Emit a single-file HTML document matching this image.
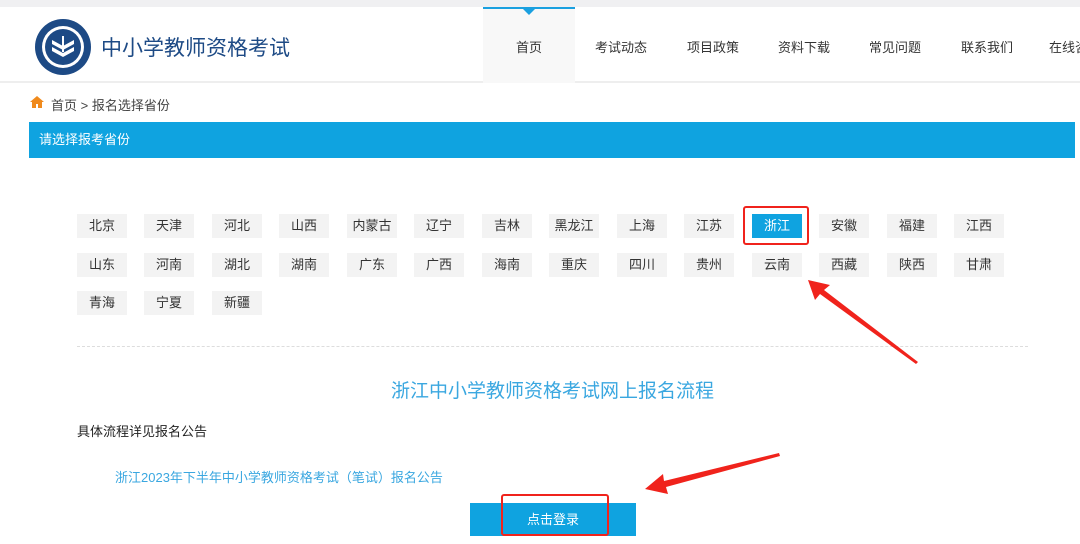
<!DOCTYPE html><html><head><meta charset="utf-8"><style>
*{margin:0;padding:0;box-sizing:border-box}
body{width:1080px;height:544px;overflow:hidden;background:#fff;font-family:"Liberation Sans","Noto Sans CJK SC",sans-serif;position:relative;font-size:13px;color:#333}
.abs{position:absolute}
.top{left:0;top:0;width:1080px;height:7px;background:#f0f0f2}
.hdr{left:0;top:7px;width:1080px;height:76px;background:#fff;border-bottom:2px solid #eee}
.nav{top:7px;height:76px;line-height:82px;font-size:13px;color:#333;text-align:center}
.p{position:absolute;width:50px;height:24px;line-height:24px;background:#f3f3f3;text-align:center;font-size:13px;color:#333}
</style></head><body>
<div class="abs top"></div>
<div class="abs hdr"></div>
<svg class="abs" style="left:34px;top:18px" width="58" height="58" viewBox="0 0 58 58"><circle cx="29" cy="29" r="28" fill="#1d4a85"/><circle cx="29" cy="29" r="21" fill="#fff"/><circle cx="29" cy="29" r="18" fill="#1d4a85"/><path d="M18 22l11 6 11-6v4l-11 6-11-6z M18 29l11 6 11-6v4l-11 6-11-6z" fill="#fff"/><path d="M29 18v16" stroke="#fff" stroke-width="2"/></svg>
<div class="abs" style="left:101px;top:32px;font-size:21px;color:#1d4a85">中小学教师资格考试</div>
<div class="abs" style="left:483px;top:7px;width:92px;height:76px;background:#f8f8f8;border-top:2px solid #1aa0e0"></div>
<div class="abs" style="left:523px;top:9px;width:0;height:0;border-left:6px solid transparent;border-right:6px solid transparent;border-top:6px solid #1aa0e0"></div>
<div class="abs nav" style="left:483px;width:92px">首页</div>
<div class="abs nav" style="left:590px;width:62px">考试动态</div>
<div class="abs nav" style="left:682px;width:62px">项目政策</div>
<div class="abs nav" style="left:773px;width:62px">资料下载</div>
<div class="abs nav" style="left:864px;width:62px">常见问题</div>
<div class="abs nav" style="left:956px;width:62px">联系我们</div>
<div class="abs nav" style="left:1049px;width:62px;text-align:left">在线咨询</div>
<svg class="abs" style="left:29px;top:95px" width="16" height="14" viewBox="0 0 16 14"><path d="M8 1L1 7h2v6h4V9h2v4h4V7h2z" fill="#f08a1c"/></svg>
<div class="abs" style="left:51px;top:95px;font-size:13px;color:#444">首页 &gt; 报名选择省份</div>
<div class="abs" style="left:29px;top:122px;width:1046px;height:36px;background:#0fa3e0;color:#fff;line-height:36px;padding-left:10px;font-size:13px">请选择报考省份</div>
<div class="p" style="left:77px;top:214px">北京</div><div class="p" style="left:144px;top:214px">天津</div><div class="p" style="left:212px;top:214px">河北</div><div class="p" style="left:279px;top:214px">山西</div><div class="p" style="left:347px;top:214px">内蒙古</div><div class="p" style="left:414px;top:214px">辽宁</div><div class="p" style="left:482px;top:214px">吉林</div><div class="p" style="left:549px;top:214px">黑龙江</div><div class="p" style="left:617px;top:214px">上海</div><div class="p" style="left:684px;top:214px">江苏</div><div class="p" style="left:752px;top:214px;background:#0fa3e0;color:#fff">浙江</div><div class="p" style="left:819px;top:214px">安徽</div><div class="p" style="left:887px;top:214px">福建</div><div class="p" style="left:954px;top:214px">江西</div>
<div class="p" style="left:77px;top:253px">山东</div><div class="p" style="left:144px;top:253px">河南</div><div class="p" style="left:212px;top:253px">湖北</div><div class="p" style="left:279px;top:253px">湖南</div><div class="p" style="left:347px;top:253px">广东</div><div class="p" style="left:414px;top:253px">广西</div><div class="p" style="left:482px;top:253px">海南</div><div class="p" style="left:549px;top:253px">重庆</div><div class="p" style="left:617px;top:253px">四川</div><div class="p" style="left:684px;top:253px">贵州</div><div class="p" style="left:752px;top:253px">云南</div><div class="p" style="left:819px;top:253px">西藏</div><div class="p" style="left:887px;top:253px">陕西</div><div class="p" style="left:954px;top:253px">甘肃</div>
<div class="p" style="left:77px;top:291px">青海</div><div class="p" style="left:144px;top:291px">宁夏</div><div class="p" style="left:212px;top:291px">新疆</div>
<div class="abs" style="left:743px;top:206px;width:66px;height:39px;border:2px solid #f0231c;border-radius:3px"></div>
<div class="abs" style="left:77px;top:346px;width:951px;border-top:1px dashed #ddd"></div>
<div class="abs" style="left:0;top:376px;width:1105px;text-align:center;font-size:19px;color:#3aa7e0">浙江中小学教师资格考试网上报名流程</div>
<div class="abs" style="left:77px;top:421px;font-size:13px;color:#222">具体流程详见报名公告</div>
<div class="abs" style="left:115px;top:467px;font-size:13px;color:#3aa7e0">浙江2023年下半年中小学教师资格考试（笔试）报名公告</div>
<div class="abs" style="left:470px;top:503px;width:166px;height:33px;background:#0fa3e0;color:#fff;text-align:center;line-height:33px;font-size:13px">点击登录</div>
<div class="abs" style="left:501px;top:494px;width:108px;height:42px;border:2px solid #f0231c;border-radius:3px"></div>
<svg class="abs" style="left:0;top:0" width="1080" height="544"><polygon points="808,280 830,285 824,290 918,362 916,364 820,294 815,300" fill="#f0231c"/><polygon points="645,489 663,474 664,481 779,453 780,456 666,487 668,494" fill="#f0231c"/></svg>
</body></html>
